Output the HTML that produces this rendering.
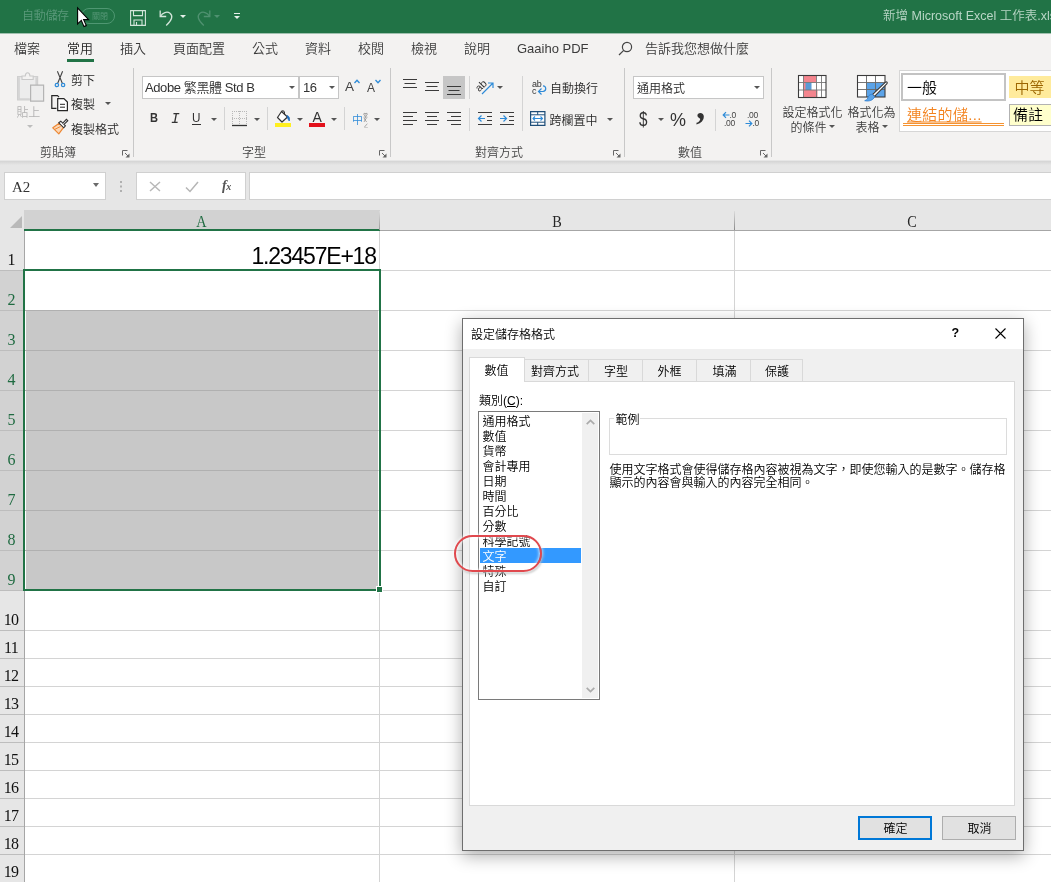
<!DOCTYPE html>
<html lang="zh-Hant">
<head>
<meta charset="utf-8">
<title>Excel</title>
<style>
html,body{margin:0;padding:0}
body{width:1051px;height:882px;overflow:hidden;position:relative;background:#fff;font-family:"Liberation Sans","Noto Sans CJK TC",sans-serif;font-size:12px;color:#262626;line-height:1;font-weight:350;will-change:transform}
.a{position:absolute;white-space:nowrap}
.t{position:absolute;white-space:nowrap;transform:translateY(-50%)}
svg{position:absolute;overflow:visible}
/* title bar */
#title{left:0;top:0;width:1051px;height:33px;background:#217346}
/* tabs + ribbon */
#ribbon{left:0;top:33px;width:1051px;height:128px;background:#f3f2f1}
.tab{font-size:13px;color:#3b3b3b;top:48px}
.rl{font-size:12px;color:#444;top:153px}
.rt{font-size:12px;color:#262626}
.vs{position:absolute;width:1px;background:#c8c8c8}
.box{position:absolute;background:#fff;border:1px solid #c6c6c6;box-sizing:border-box}
.dd{position:absolute;width:0;height:0;border-left:3px solid transparent;border-right:3px solid transparent;border-top:3px solid #555}
/* formula bar */
#fbar{left:0;top:160px;width:1051px;height:50px;background:#e6e6e6}
/* sheet */
#sheet{left:0;top:210px;width:1051px;height:672px;background:#fff}
.hl{position:absolute;left:25px;width:1027px;height:1px;background:#d4d4d4}
.vl{position:absolute;top:231px;width:1px;height:651px;background:#d4d4d4}
.rn{position:absolute;left:-1px;width:24px;text-align:center;font-family:"Liberation Serif",serif;font-size:16px;color:#262626;letter-spacing:-.8px}
.cn{position:absolute;top:213px;text-align:center;font-family:"Liberation Serif",serif;font-size:17px;color:#262626;transform:scaleX(.84)}
/* dialog */
#dlg{left:462px;top:318px;width:562px;height:533px;background:#f0f0f0;border:1px solid #6e6e6e;box-sizing:border-box;box-shadow:0 5px 16px rgba(0,0,0,.32)}
.dt{font-size:12px;color:#000}
</style>
</head>
<body>
<!-- TITLE BAR -->
<div class="a" id="title">
<div class="t" style="left:22px;top:16px;font-size:12px;color:#5b9a7b;letter-spacing:-.3px">自動儲存</div>
<div class="a" style="left:81px;top:8px;width:34px;height:16px;border:1px solid #4f9772;border-radius:8px;box-sizing:border-box"></div>
<div class="t" style="left:92px;top:16.5px;font-size:8px;color:#5b9a7b">關閉</div>
<!-- save -->
<svg style="left:130px;top:10px" width="16" height="16" viewBox="0 0 16 16" fill="none" stroke="#d3e5da" stroke-width="1.1"><path d="M.6.6h14.8v14.8H.6z"/><path d="M3.5.6v5h9v-5"/><path d="M4 15.4V10h8v5.4"/><path d="M6.5 15v-3"/></svg>
<!-- undo -->
<svg style="left:159px;top:9px" width="16" height="17" viewBox="0 0 16 17" fill="none" stroke="#d3e5da" stroke-width="1.3"><path d="M1.2 1.5v6h6"/><path d="M1.5 7.3C3.5 3.6 8 2 11 4.200c3.200 2.500 2.200 7-3.800 12.300"/></svg>
<div class="dd" style="left:180px;top:15px;border-top-color:#e5f0ea"></div>
<!-- redo -->
<svg style="left:195px;top:9px" width="16" height="17" viewBox="0 0 16 17" fill="none" stroke="#4f9170" stroke-width="1.3"><path d="M14.800 1.500v6h-6"/><path d="M14.500 7.300C12.500 3.600 8 2 5 4.200c-3.200 2.500-2.200 7 3.800 12.300"/></svg>
<div class="dd" style="left:214px;top:15px;border-top-color:#4f9170"></div>
<!-- customize -->
<div class="a" style="left:234px;top:13px;width:6px;height:1px;background:#e5f0ea"></div>
<div class="dd" style="left:234px;top:16px;border-top-color:#e5f0ea"></div>
<!-- cursor -->
<svg style="left:76.800px;top:6.500px;z-index:5" width="13" height="21" viewBox="0 0 13 21"><path d="M.6.900v16l3.700-3.500 2.700 6.200 2.300-1-2.700-6h5z" fill="#fff" stroke="#000" stroke-width="1.100" stroke-linejoin="miter"/></svg>
<div class="t" style="left:883px;top:16px;font-size:12.500px;color:#b9d6c6">新增 Microsoft Excel 工作表.xls</div>
</div>
<!-- RIBBON -->
<div class="a" style="left:0;top:33px;width:1051px;height:1px;background:#9fc0ae;z-index:2"></div>
<div class="a" id="ribbon"></div>
<!-- tabs -->
<div class="t tab" style="left:14px">檔案</div>
<div class="t tab" style="left:67px;color:#1e1e1e">常用</div>
<div class="a" style="left:67px;top:59px;width:27px;height:3px;background:#217346"></div>
<div class="t tab" style="left:120px">插入</div>
<div class="t tab" style="left:173px">頁面配置</div>
<div class="t tab" style="left:252px">公式</div>
<div class="t tab" style="left:305px">資料</div>
<div class="t tab" style="left:358px">校閱</div>
<div class="t tab" style="left:411px">檢視</div>
<div class="t tab" style="left:464px">說明</div>
<div class="t tab" style="left:517px">Gaaiho PDF</div>
<svg style="left:618px;top:41px" width="15" height="15" viewBox="0 0 15 15" fill="none" stroke="#444" stroke-width="1.2"><circle cx="9" cy="6" r="4.600"/><path d="M5.700 9.300L1 14"/></svg>
<div class="t tab" style="left:645px">告訴我您想做什麼</div>
<!-- group separators -->
<div class="vs" style="left:133px;top:68px;height:89px"></div>
<div class="vs" style="left:390px;top:68px;height:89px"></div>
<div class="vs" style="left:624px;top:68px;height:89px"></div>
<div class="vs" style="left:771px;top:68px;height:89px"></div>
<!-- group labels -->
<div class="t rl" style="left:40px">剪貼簿</div>
<div class="t rl" style="left:242px">字型</div>
<div class="t rl" style="left:475px">對齊方式</div>
<div class="t rl" style="left:678px">數值</div>
<!-- CLIPBOARD -->
<svg style="left:17px;top:72px" width="28" height="30" viewBox="0 0 28 30" fill="none"><path d="M.6 4.600h20v23.200H.6z" fill="#ececec" stroke="#cfcfcf" stroke-width="1.200"/><path d="M1.200 5.200h1.600v21h10v1.600H1.200z" fill="#d2d2d2"/><path d="M18.400 5.200h1.600v8h-1.600z" fill="#d2d2d2"/><path d="M5 7.500V4h3.300C8.400 2 9.300.8 10.600.8s2.200 1.200 2.300 3.200h3.300v3.500z" fill="#f3f2f1" stroke="#c9c9c9" stroke-width="1.100"/><path d="M13.600 13.100h13v16h-13z" fill="#ececec" stroke="#b4b4b4" stroke-width="1.200"/></svg>
<div class="t" style="left:16.500px;top:112.800px;font-size:12px;color:#b3b3b3;letter-spacing:-.3px">貼上</div>
<div class="dd" style="left:26.500px;top:125px;border-top-color:#bdbdbd"></div>
<!-- scissors -->
<svg style="left:54px;top:71px" width="12" height="17" viewBox="0 0 12 17" fill="none"><path d="M3.400.3L8.300 12.200M8.600.3L3.700 12.200" stroke="#444" stroke-width="1.100"/><circle cx="2.900" cy="14" r="1.700" stroke="#2e8bd8" stroke-width="1.200"/><circle cx="9.100" cy="14" r="1.700" stroke="#2e8bd8" stroke-width="1.200"/></svg>
<div class="t rt" style="left:71px;top:81px">剪下</div>
<!-- copy -->
<svg style="left:51px;top:95px" width="18" height="17" viewBox="0 0 18 17" fill="none" stroke="#262626" stroke-width="1.2"><path d="M5.500 13.400H.8V.7h5.700l1.500 1.500"/><path d="M6.700 3.600h6.200l3.500 3.500v8.600H6.700z" fill="#fff"/><path d="M9 9.300h5M9 12.200h5" stroke-width="1"/></svg>
<div class="t rt" style="left:71px;top:105px">複製</div>
<div class="dd" style="left:104.500px;top:102px"></div>
<!-- format painter -->
<svg style="left:52px;top:118px" width="17" height="17" viewBox="0 0 17 17" fill="none"><path d="M7.200 5.200L.8 9.800l6 6 4.800-6.400z" fill="#fbd7b5" stroke="#ed8733" stroke-width="1.200" stroke-linejoin="round"/><path d="M2.500 11.500l6-3" stroke="#ed8733" stroke-width="1"/><path d="M6.800 4.800l2-1.600 4.600 4.600-1.600 2z" fill="#fff" stroke="#333" stroke-width="1.100"/><path d="M10.800 5.200l3.600-3.900 1.400 1.400-3.800 3.700" fill="#fff" stroke="#333" stroke-width="1.100"/></svg>
<div class="t rt" style="left:71px;top:129.500px">複製格式</div>
<!-- launcher -->
<svg class="ln" style="left:122px;top:150px" width="8" height="8" viewBox="0 0 8 8" fill="none" stroke="#666" stroke-width="1"><path d="M.5 5.500V.5h5"/><path d="M3 3l3 3"/><path d="M7.500 3.500v4h-4z" fill="#666" stroke="none"/></svg>
<!-- CLIPBOARD-END -->
<!-- FONT -->
<div class="box" style="left:142px;top:76px;width:157px;height:23px"></div>
<div class="t" style="left:145px;top:87px;font-size:13px;color:#333;letter-spacing:-.4px">Adobe 繁黑體 Std B</div>
<div class="dd" style="left:288.500px;top:86px"></div>
<div class="box" style="left:299px;top:76px;width:40px;height:23px"></div>
<div class="t" style="left:303px;top:87px;font-size:13px;color:#333;letter-spacing:-.4px">16</div>
<div class="dd" style="left:328.500px;top:86px"></div>
<div class="t" style="left:345px;top:86.500px;font-size:13.500px;color:#444">A</div>
<svg style="left:354px;top:79px" width="6" height="5" viewBox="0 0 6 5" fill="none" stroke="#2e8bd8" stroke-width="1.300"><path d="M.5 4L3 1.200 5.500 4"/></svg>
<div class="t" style="left:367px;top:87.500px;font-size:12px;color:#444">A</div>
<svg style="left:375px;top:79px" width="6" height="5" viewBox="0 0 6 5" fill="none" stroke="#2e8bd8" stroke-width="1.300"><path d="M.5 1L3 3.800 5.500 1"/></svg>
<div class="t" style="left:149.500px;top:117.500px;font-size:13.500px;font-weight:bold;color:#333;transform:translateY(-50%) scaleX(.82);transform-origin:left">B</div>
<div class="t" style="left:171px;top:118.500px;font-size:14.500px;font-style:italic;color:#333;font-family:'Liberation Mono',monospace">I</div>
<div class="t" style="left:192px;top:117px;font-size:13px;color:#333;transform:translateY(-50%) scaleX(.9);transform-origin:left">U</div>
<div class="a" style="left:192px;top:124px;width:9px;height:1px;background:#333"></div>
<div class="dd" style="left:210.500px;top:118px"></div>
<div class="vs" style="left:224px;top:107px;height:23px;background:#d4d4d4"></div>
<svg style="left:232px;top:111px" width="16" height="16" viewBox="0 0 16 16" fill="none"><path d="M.5 0v14M7.500 0v14M14.500 0v14M0 .5h15M0 7.500h15" stroke="#b9b9b9" stroke-width="1" stroke-dasharray="1 1"/><path d="M0 14.500h15" stroke="#333" stroke-width="1.300"/></svg>
<div class="dd" style="left:253.500px;top:118px"></div>
<div class="vs" style="left:267px;top:107px;height:23px;background:#d4d4d4"></div>
<!-- fill bucket -->
<svg style="left:275px;top:110px" width="17" height="18" viewBox="0 0 17 18" fill="none"><path d="M6.500 1.500l6 5.500-5.500 5L2.500 7.500z" fill="#fff" stroke="#333" stroke-width="1.200" stroke-linejoin="round"/><path d="M6.500 1.500c1.500-1.500 3.500-.5 3 3" stroke="#333" stroke-width="1.100"/><path d="M12 5.500c2 .5 3 2.500 2.300 5.500-.9-1-1.500-2-2.300-5.500z" fill="#1f6fc0" stroke="#1f6fc0" stroke-width=".8"/><rect x="0" y="13" width="16" height="4" fill="#ffef1f"/></svg>
<div class="dd" style="left:296.500px;top:118px"></div>
<div class="t" style="left:312.500px;top:116.500px;font-size:14px;color:#333">A</div>
<div class="a" style="left:309px;top:123px;width:16px;height:4px;background:#e3111b"></div>
<div class="dd" style="left:330.500px;top:118px"></div>
<div class="vs" style="left:344px;top:107px;height:23px;background:#d4d4d4"></div>
<div class="t" style="left:352px;top:119.500px;font-size:11px;color:#2e8bd8">中</div>
<div class="t" style="left:363px;top:115px;font-size:5px;color:#666">堂</div>
<div class="t" style="left:363.500px;top:120px;font-size:5px;color:#666">X</div>
<div class="t" style="left:363.500px;top:125px;font-size:5px;color:#666">∠</div>
<div class="dd" style="left:373.500px;top:118px"></div>
<svg class="ln" style="left:379px;top:150px" width="8" height="8" viewBox="0 0 8 8" fill="none" stroke="#666" stroke-width="1"><path d="M.5 5.500V.5h5"/><path d="M3 3l3 3"/><path d="M7.500 3.500v4h-4z" fill="#666" stroke="none"/></svg>
<!-- FONT-END -->
<!-- ALIGN -->
<div class="a" style="left:443px;top:76px;width:22px;height:23px;background:#c6c6c6"></div>
<svg style="left:403px;top:76px" width="60" height="24" viewBox="0 0 60 24" fill="none" stroke="#3b3b3b" stroke-width="1.100"><path d="M0 3.500h14M1.500 7.500h11M0 11.500h14"/><path d="M22 6.500h14M23.500 10.500h11M22 14.500h14"/><path d="M44 10.500h14M45.500 14.500h11M44 18.500h14"/></svg>
<div class="vs" style="left:469px;top:76px;height:23px;background:#d4d4d4"></div>
<div class="vs" style="left:469px;top:108px;height:23px;background:#d4d4d4"></div>
<div class="a" style="left:475px;top:79px;font-size:10.500px;color:#333;transform:rotate(-45deg);transform-origin:left top;left:473px;top:85.500px">ab</div>
<svg style="left:481px;top:81px" width="14" height="14" viewBox="0 0 14 14" fill="none" stroke="#2e8bd8" stroke-width="1.200"><path d="M1 13L12 2M7 2h5v5"/></svg>
<div class="dd" style="left:496.500px;top:86px"></div>
<svg style="left:403px;top:108px" width="60" height="20" viewBox="0 0 60 20" fill="none" stroke="#3b3b3b" stroke-width="1.100"><path d="M0 4.500h14M0 8.500h10M0 12.500h14M0 16.500h10"/><path d="M22 4.500h14M24 8.500h10M22 12.500h14M24 16.500h10"/><path d="M44 4.500h14M48 8.500h10M44 12.500h14M48 16.500h10"/></svg>
<svg style="left:478px;top:108px" width="38" height="20" viewBox="0 0 38 20" fill="none" stroke="#3b3b3b" stroke-width="1.100"><path d="M0 4.500h14M9 8.500h5M9 12.500h5M0 16.500h14"/><path d="M22 4.500h14M31 8.500h5M31 12.500h5M22 16.500h14"/><path d="M7 10.500H.8M3.500 7.500l-3 3 3 3" stroke="#2e8bd8" stroke-width="1.200"/><path d="M22 10.500h6.200M25.500 7.500l3 3-3 3" stroke="#2e8bd8" stroke-width="1.200"/></svg>
<!-- wrap text -->
<div class="vs" style="left:522px;top:76px;height:55px;background:#d4d4d4"></div>
<div class="t" style="left:532px;top:83.500px;font-size:9px;color:#333;letter-spacing:-.2px">ab</div>
<div class="t" style="left:532px;top:91px;font-size:9px;color:#333">c</div>
<svg style="left:537px;top:85px" width="10" height="11" viewBox="0 0 10 11" fill="none" stroke="#2e8bd8" stroke-width="1.200"><path d="M6 .8c3.500.2 3.800 5.200 0 5.700H1.500"/><path d="M4.500 3.500l-3 3 3 3"/></svg>
<div class="t rt" style="left:550px;top:88.500px">自動換行</div>
<svg style="left:530px;top:111px" width="16" height="15" viewBox="0 0 16 15" fill="none"><path d="M.6.6h14.300v13.800H.6z" stroke="#1e4e79" stroke-width="1.200" fill="#fff"/><path d="M.6 3.800h14.300M.6 11.200h14.300M7.700.6v3.200M7.700 11.200v3.200" stroke="#1e4e79" stroke-width="1"/><path d="M3 7.500h9.500M5 5.500l-2 2 2 2M10.500 5.500l2 2-2 2" stroke="#2e8bd8" stroke-width="1.100"/></svg>
<div class="t rt" style="left:549.500px;top:120.500px">跨欄置中</div>
<div class="dd" style="left:607px;top:118px"></div>
<svg class="ln" style="left:613px;top:150px" width="8" height="8" viewBox="0 0 8 8" fill="none" stroke="#666" stroke-width="1"><path d="M.5 5.500V.5h5"/><path d="M3 3l3 3"/><path d="M7.500 3.500v4h-4z" fill="#666" stroke="none"/></svg>
<!-- ALIGN-END -->
<!-- NUMBER -->
<div class="box" style="left:633px;top:76px;width:131px;height:23px"></div>
<div class="t rt" style="left:637px;top:88.500px">通用格式</div>
<div class="dd" style="left:753.500px;top:86px"></div>
<div class="t" style="left:639px;top:119.500px;font-size:19.500px;color:#333;transform:translateY(-50%) scaleX(.78);transform-origin:left">$</div>
<div class="dd" style="left:657.500px;top:118px"></div>
<div class="t" style="left:670px;top:119.500px;font-size:18px;color:#333;transform:translateY(-50%) scaleX(1);transform-origin:left">%</div>
<div class="t" style="left:696px;top:105.500px;font-size:37px;font-weight:bold;color:#333;font-family:'Liberation Serif',serif">,</div>
<div class="vs" style="left:715px;top:109px;height:22px;background:#d4d4d4"></div>
<svg style="left:722px;top:111px" width="40" height="17" viewBox="0 0 40 17" fill="none" stroke="#2e8bd8" stroke-width="1.200"><path d="M7.500 4H1.200M4 1.200L1.200 4 4 6.800"/><path d="M23.500 12.500h6.300M27 9.700l2.800 2.800-2.800 2.800"/></svg>
<div class="t" style="left:729.500px;top:115px;font-size:8.500px;color:#444;letter-spacing:-.3px">.0</div>
<div class="t" style="left:724px;top:123px;font-size:8.500px;color:#444;letter-spacing:-.3px">.00</div>
<div class="t" style="left:747px;top:115px;font-size:8.500px;color:#444;letter-spacing:-.3px">.00</div>
<div class="t" style="left:752.500px;top:123px;font-size:8.500px;color:#444;letter-spacing:-.3px">.0</div>
<svg class="ln" style="left:760px;top:150px" width="8" height="8" viewBox="0 0 8 8" fill="none" stroke="#666" stroke-width="1"><path d="M.5 5.500V.5h5"/><path d="M3 3l3 3"/><path d="M7.500 3.500v4h-4z" fill="#666" stroke="none"/></svg>
<!-- NUMBER-END -->
<!-- STYLES -->
<svg style="left:798px;top:75px" width="29" height="23" viewBox="0 0 29 23" fill="none"><rect x=".5" y=".5" width="27.500" height="22" fill="#fff"/><rect x="5.500" y=".5" width="12.500" height="7" fill="#f4858e"/><rect x="5.500" y="15" width="14" height="7.500" fill="#f4858e"/><rect x="5.500" y="7.500" width="8" height="7.500" fill="#5b9bd5"/><rect x="5.500" y="7.500" width="2" height="7.500" fill="#f4858e"/><path d="M.5 7.500h27.500M.5 15h27.500M5.500.5v22M18.500.5v22M23.500.5v22" stroke="#777" stroke-width=".9"/><rect x=".5" y=".5" width="27.500" height="22" stroke="#3b3b3b" stroke-width="1.100"/></svg>
<div class="t rt" style="left:782.500px;top:112.500px;color:#3b3b3b">設定格式化</div>
<div class="t rt" style="left:790.500px;top:128px;color:#3b3b3b">的條件</div>
<div class="dd" style="left:829px;top:125px"></div>
<svg style="left:857px;top:75px" width="32" height="28" viewBox="0 0 32 28" fill="none"><rect x=".5" y=".5" width="27.500" height="21.500" fill="#fff"/><rect x="9.500" y="7.500" width="18.500" height="14.500" fill="#5ba3e8"/><path d="M.5 7.500h27.500M.5 14.500h27.500M9.500.5v21.500M18.500.5v21.500" stroke="#666" stroke-width=".9"/><rect x=".5" y=".5" width="27.500" height="21.500" stroke="#3b3b3b" stroke-width="1.100"/><path d="M28.500 7.200c1.200-.8 2.300.4 1.500 1.500L17.500 21.500l-2-2z" fill="#fff" stroke="#3b3b3b" stroke-width="1.100"/><path d="M15.300 19.300l2.400 2.400c-1.500 3.500-5.500 5-10 4 2.500-.8 3-2.200 3.600-4 .7-1.800 2.500-2.500 4-2.400z" fill="#5ba3e8" stroke="#2e7fd0" stroke-width=".8"/></svg>
<div class="t rt" style="left:847.500px;top:112.500px;color:#3b3b3b">格式化為</div>
<div class="t rt" style="left:855.500px;top:128px;color:#3b3b3b">表格</div>
<div class="dd" style="left:882px;top:125px"></div>
<div class="box" style="left:899px;top:70px;width:160px;height:62px;border-color:#d6d6d6"></div>
<div class="a" style="left:901px;top:73px;width:105px;height:28px;border:2px solid #c3c3c3;box-sizing:border-box;background:#fff"></div>
<div class="t" style="left:907px;top:86.500px;font-size:15px;color:#000">一般</div>
<div class="a" style="left:1009px;top:76px;width:50px;height:22px;background:#ffeb9c"></div>
<div class="t" style="left:1014.500px;top:86.500px;font-size:15px;color:#9c6500">中等</div>
<div class="t" style="left:907px;top:113.500px;font-size:15px;letter-spacing:.3px;color:#f3831f;text-decoration:underline;text-underline-offset:2px;text-decoration-thickness:1px">連結的儲...</div>
<div class="a" style="left:903px;top:123px;width:101px;height:3px;border-top:1px solid #f59331;border-bottom:1px solid #f59331;box-sizing:border-box"></div>
<div class="a" style="left:1009px;top:104px;width:50px;height:22px;background:#ffffcc;border:1px solid #b2b2b2;box-sizing:border-box"></div>
<div class="t" style="left:1013px;top:113.500px;font-size:15px;color:#000">備註</div>
<!-- STYLES-END -->
<!-- FORMULA BAR -->
<div class="a" id="fbar"></div>
<div class="a" style="left:0;top:161px;width:1051px;height:4px;background:linear-gradient(#d4d4d4,#e6e6e6)"></div>
<div class="box" style="left:4px;top:172px;width:102px;height:28px;border-color:#d0d0d0"></div>
<div class="t" style="left:12px;top:186.500px;font-size:15px;color:#333;font-family:'Liberation Serif',serif">A2</div>
<div class="a" style="left:93px;top:183px;width:0;height:0;border-left:3.500px solid transparent;border-right:3.500px solid transparent;border-top:4px solid #6a6a6a"></div>
<div class="a" style="left:120px;top:180.500px;width:2px;height:2px;background:#b0b0b0;box-shadow:0 4.500px 0 #b0b0b0,0 9px 0 #b0b0b0"></div>
<div class="box" style="left:136px;top:172px;width:110px;height:28px;border-color:#d0d0d0"></div>
<svg style="left:149px;top:181px" width="12" height="11" viewBox="0 0 12 11" fill="none" stroke="#b8b8b8" stroke-width="1.500"><path d="M1 1l10 9M11 1L1 10"/></svg>
<svg style="left:184.500px;top:181px" width="14" height="12" viewBox="0 0 14 12" fill="none" stroke="#b5b5b5" stroke-width="1.500"><path d="M1 6.500l4 4L13 1"/></svg>
<div class="t" style="left:222px;top:185.500px;font-size:14px;color:#555;font-style:italic;font-weight:bold;font-family:'Liberation Serif',serif;letter-spacing:-.5px">f<span style="font-size:10px">x</span></div>
<div class="box" style="left:249px;top:172px;width:810px;height:28px;border-color:#d0d0d0"></div>
<!-- SHEET -->
<div class="a" id="sheet"></div>
<div class="a" style="left:0;top:210px;width:1051px;height:21px;background:#e6e6e6"></div>
<div class="a" style="left:24px;top:210px;width:356px;height:20px;background:#d2d2d2"></div>
<div class="a" style="left:380px;top:230px;width:671px;height:1px;background:#a6a6a6"></div>
<div class="a" style="left:24px;top:229px;width:356px;height:2px;background:#217346"></div>
<div class="a" style="left:379px;top:211px;width:1px;height:19px;background:linear-gradient(#dcdcdc,#9a9a9a)"></div>
<div class="a" style="left:734px;top:211px;width:1px;height:19px;background:linear-gradient(#dcdcdc,#8a8a8a)"></div>
<svg style="left:9px;top:215px" width="14" height="14" viewBox="0 0 14 14"><path d="M13 1v12H1z" fill="#b9b9b9"/></svg>
<div class="cn" style="left:24px;width:355px;color:#1f6b41">A</div>
<div class="cn" style="left:380px;width:354px">B</div>
<div class="cn" style="left:735px;width:354px">C</div>
<div class="a" style="left:0;top:231px;width:24px;height:651px;background:#e6e6e6"></div>
<div class="a" style="left:0;top:271px;width:24px;height:320px;background:#d2d2d2"></div>
<div class="a" style="left:24px;top:231px;width:1px;height:651px;background:#a6a6a6"></div>
<div class="a" style="left:26px;top:311px;width:352px;height:278px;background:#c8c8c8"></div>
<div class="hl" style="top:270px"></div>
<div class="a" style="left:0;top:270px;width:24px;height:1px;background:#bdbdbd"></div>
<div class="hl" style="top:310px"></div>
<div class="a" style="left:0;top:310px;width:24px;height:1px;background:#bdbdbd"></div>
<div class="hl" style="top:350px"></div>
<div class="a" style="left:0;top:350px;width:24px;height:1px;background:#bdbdbd"></div>
<div class="hl" style="top:390px"></div>
<div class="a" style="left:0;top:390px;width:24px;height:1px;background:#bdbdbd"></div>
<div class="hl" style="top:430px"></div>
<div class="a" style="left:0;top:430px;width:24px;height:1px;background:#bdbdbd"></div>
<div class="hl" style="top:470px"></div>
<div class="a" style="left:0;top:470px;width:24px;height:1px;background:#bdbdbd"></div>
<div class="hl" style="top:510px"></div>
<div class="a" style="left:0;top:510px;width:24px;height:1px;background:#bdbdbd"></div>
<div class="hl" style="top:550px"></div>
<div class="a" style="left:0;top:550px;width:24px;height:1px;background:#bdbdbd"></div>
<div class="hl" style="top:590px"></div>
<div class="a" style="left:0;top:590px;width:24px;height:1px;background:#bdbdbd"></div>
<div class="hl" style="top:630px"></div>
<div class="a" style="left:0;top:630px;width:24px;height:1px;background:#bdbdbd"></div>
<div class="hl" style="top:658px"></div>
<div class="a" style="left:0;top:658px;width:24px;height:1px;background:#bdbdbd"></div>
<div class="hl" style="top:686px"></div>
<div class="a" style="left:0;top:686px;width:24px;height:1px;background:#bdbdbd"></div>
<div class="hl" style="top:714px"></div>
<div class="a" style="left:0;top:714px;width:24px;height:1px;background:#bdbdbd"></div>
<div class="hl" style="top:742px"></div>
<div class="a" style="left:0;top:742px;width:24px;height:1px;background:#bdbdbd"></div>
<div class="hl" style="top:770px"></div>
<div class="a" style="left:0;top:770px;width:24px;height:1px;background:#bdbdbd"></div>
<div class="hl" style="top:798px"></div>
<div class="a" style="left:0;top:798px;width:24px;height:1px;background:#bdbdbd"></div>
<div class="hl" style="top:826px"></div>
<div class="a" style="left:0;top:826px;width:24px;height:1px;background:#bdbdbd"></div>
<div class="hl" style="top:854px"></div>
<div class="a" style="left:0;top:854px;width:24px;height:1px;background:#bdbdbd"></div>
<div class="a" style="left:25px;top:310px;width:353px;height:1px;background:#b0b0b0"></div>
<div class="a" style="left:25px;top:350px;width:353px;height:1px;background:#b0b0b0"></div>
<div class="a" style="left:25px;top:390px;width:353px;height:1px;background:#b0b0b0"></div>
<div class="a" style="left:25px;top:430px;width:353px;height:1px;background:#b0b0b0"></div>
<div class="a" style="left:25px;top:470px;width:353px;height:1px;background:#b0b0b0"></div>
<div class="a" style="left:25px;top:510px;width:353px;height:1px;background:#b0b0b0"></div>
<div class="a" style="left:25px;top:550px;width:353px;height:1px;background:#b0b0b0"></div>
<div class="vl" style="left:379px"></div>
<div class="vl" style="left:734px"></div>
<div class="rn" style="top:252px;color:#111">1</div>
<div class="rn" style="top:292px;color:#1f6b41">2</div>
<div class="rn" style="top:332px;color:#1f6b41">3</div>
<div class="rn" style="top:372px;color:#1f6b41">4</div>
<div class="rn" style="top:412px;color:#1f6b41">5</div>
<div class="rn" style="top:452px;color:#1f6b41">6</div>
<div class="rn" style="top:492px;color:#1f6b41">7</div>
<div class="rn" style="top:532px;color:#1f6b41">8</div>
<div class="rn" style="top:572px;color:#1f6b41">9</div>
<div class="rn" style="top:612px;color:#111">10</div>
<div class="rn" style="top:640px;color:#111">11</div>
<div class="rn" style="top:668px;color:#111">12</div>
<div class="rn" style="top:696px;color:#111">13</div>
<div class="rn" style="top:724px;color:#111">14</div>
<div class="rn" style="top:752px;color:#111">15</div>
<div class="rn" style="top:780px;color:#111">16</div>
<div class="rn" style="top:808px;color:#111">17</div>
<div class="rn" style="top:836px;color:#111">18</div>
<div class="rn" style="top:864px;color:#111">19</div>
<div class="t" id="cellv" style="left:251.500px;top:256px;font-size:23px;color:#000;letter-spacing:-1.200px">1.23457E+18</div>
<div class="a" style="left:23px;top:269px;width:358px;height:322px;border:2px solid #217346;box-sizing:border-box"></div>
<div class="a" style="left:376px;top:586px;width:7px;height:7px;background:#217346;border:1px solid #fff;box-sizing:border-box"></div>
<!-- DIALOG -->
<div class="a" id="dlg"></div>
<div class="a" style="left:463px;top:319px;width:560px;height:30px;background:#fff"></div>
<div class="t dt" style="left:471px;top:334.500px">設定儲存格格式</div>
<div class="t" style="left:951.500px;top:332.500px;font-size:12.500px;font-weight:bold;color:#000">?</div>
<svg style="left:995px;top:328px" width="11" height="11" viewBox="0 0 11 11" fill="none" stroke="#000" stroke-width="1.100"><path d="M.5.5l10 10M10.500.5l-10 10"/></svg>
<div class="a" style="left:469px;top:381px;width:546px;height:425px;background:#fff;border:1px solid #d9d9d9;box-sizing:border-box"></div>
<div class="a" style="left:524px;top:359px;width:279px;height:22px;background:#f0f0f0;border:1px solid #d9d9d9;border-bottom:none;box-sizing:border-box"></div>
<div class="a" style="left:588px;top:360px;width:1px;height:21px;background:#d9d9d9"></div>
<div class="t dt" style="left:531px;top:371.500px">對齊方式</div>
<div class="a" style="left:642px;top:360px;width:1px;height:21px;background:#d9d9d9"></div>
<div class="t dt" style="left:604px;top:371.500px">字型</div>
<div class="a" style="left:696px;top:360px;width:1px;height:21px;background:#d9d9d9"></div>
<div class="t dt" style="left:657.5px;top:371.500px">外框</div>
<div class="a" style="left:750px;top:360px;width:1px;height:21px;background:#d9d9d9"></div>
<div class="t dt" style="left:712.5px;top:371.500px">填滿</div>
<div class="t dt" style="left:765px;top:371.500px">保護</div>
<div class="a" style="left:469px;top:357px;width:56px;height:25px;background:#fff;border:1px solid #d9d9d9;border-bottom:none;box-sizing:border-box"></div>
<div class="t dt" style="left:484.500px;top:370.500px">數值</div>
<div class="t dt" style="left:479px;top:401px">類別(<span style="text-decoration:underline">C</span>):</div>
<div class="a" style="left:478px;top:411px;width:122px;height:289px;background:#fff;border:1px solid #7a7a7a;box-sizing:border-box"></div>
<div class="a" style="left:582px;top:413px;width:16px;height:285px;background:#f0f0f0"></div>
<svg style="left:585.500px;top:418.500px" width="9" height="6" viewBox="0 0 9 6" fill="none" stroke="#ababab" stroke-width="1.700"><path d="M.7 5.200L4.500 1.400l3.800 3.800"/></svg>
<svg style="left:585.500px;top:686.500px" width="9" height="6" viewBox="0 0 9 6" fill="none" stroke="#ababab" stroke-width="1.700"><path d="M.7.8l3.800 3.800L8.300.8"/></svg>
<div class="a" style="left:480px;top:548px;width:101px;height:15px;background:#3399ff"></div>
<div class="t dt" style="left:482.500px;top:421.5px;color:#000">通用格式</div>
<div class="t dt" style="left:482.500px;top:436.5px;color:#000">數值</div>
<div class="t dt" style="left:482.500px;top:451.5px;color:#000">貨幣</div>
<div class="t dt" style="left:482.500px;top:466.5px;color:#000">會計專用</div>
<div class="t dt" style="left:482.500px;top:481.5px;color:#000">日期</div>
<div class="t dt" style="left:482.500px;top:496.5px;color:#000">時間</div>
<div class="t dt" style="left:482.500px;top:511.5px;color:#000">百分比</div>
<div class="t dt" style="left:482.500px;top:526.5px;color:#000">分數</div>
<div class="t dt" style="left:482.500px;top:541.5px;color:#000">科學記號</div>
<div class="t dt" style="left:482.500px;top:556.5px;color:#fff">文字</div>
<div class="t dt" style="left:482.500px;top:571.5px;color:#000">特殊</div>
<div class="t dt" style="left:482.500px;top:586.5px;color:#000">自訂</div>
<div class="a" style="left:609px;top:418px;width:398px;height:37px;border:1px solid #dcdcdc;box-sizing:border-box"></div>
<div class="a" style="left:614px;top:412px;width:26px;height:13px;background:#fff"></div>
<div class="t dt" style="left:615.500px;top:419.500px">範例</div>
<div class="a dt" style="left:609.500px;top:463.500px;line-height:13.500px;white-space:nowrap">使用文字格式會使得儲存格內容被視為文字，即使您輸入的是數字。儲存格<br>顯示的內容會與輸入的內容完全相同。</div>
<div class="a" style="left:858px;top:816px;width:74px;height:24px;background:#e1e1e1;border:2px solid #0078d7;box-sizing:border-box"></div>
<div class="t dt" style="left:883.500px;top:829px">確定</div>
<div class="a" style="left:942px;top:816px;width:74px;height:24px;background:#e1e1e1;border:1px solid #adadad;box-sizing:border-box"></div>
<div class="t dt" style="left:967.500px;top:829px">取消</div>
<div class="a" style="left:454px;top:535px;width:88px;height:37px;border:2.500px solid #e0494e;border-radius:18.500px;box-sizing:border-box;box-shadow:0 0 3px 1px rgba(255,255,255,.75), inset 0 0 3px 1px rgba(255,255,255,.75), 1px 2px 2px rgba(0,0,0,.25)"></div>
</body>
</html>
